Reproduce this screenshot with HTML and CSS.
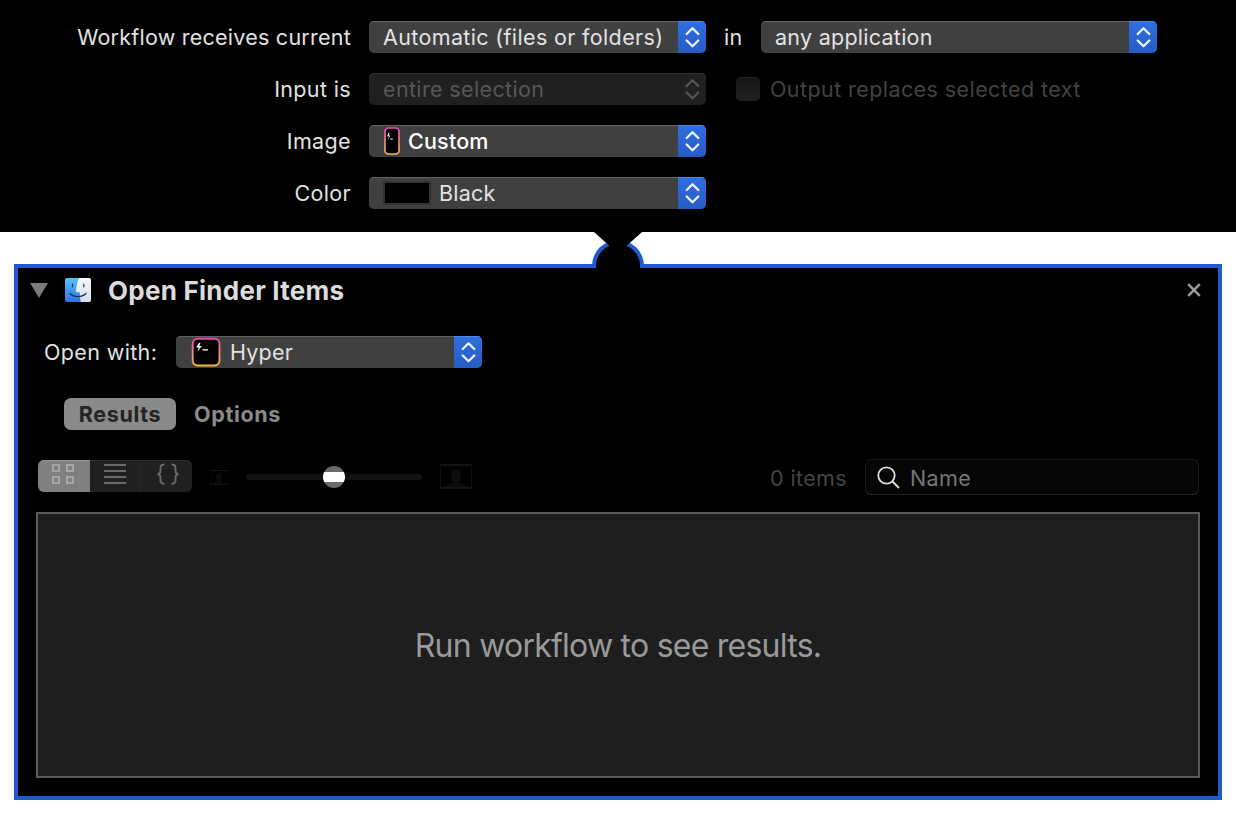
FILE: index.html
```
<!DOCTYPE html>
<html lang="en">
<head>
<meta charset="utf-8">
<title>Workflow</title>
<link rel="stylesheet" href="styles.css">
</head>
<body>
<svg width="0" height="0" class="defs">
  <defs>
    <linearGradient id="hyper" x1="0" y1="0" x2="0" y2="1"><stop offset="0" stop-color="#e84bb0"/><stop offset="1" stop-color="#f6b44c"/></linearGradient>
    <linearGradient id="face" x1="0" y1="0" x2="0" y2="1"><stop offset="0" stop-color="#55c3f8"/><stop offset="1" stop-color="#2f6fea"/></linearGradient>
    <linearGradient id="pale" x1="0" y1="0" x2="0" y2="1"><stop offset="0" stop-color="#f6f7f9"/><stop offset="1" stop-color="#d7e1f2"/></linearGradient>
    <symbol id="chev" viewBox="0 0 28 32"><path d="M8.700 13 14.500 7.200 20.300 13M8.700 19.500 14.500 25.300 20.300 19.500" fill="none" stroke="currentColor" stroke-width="2.300" stroke-linecap="round" stroke-linejoin="round"/></symbol>
    <symbol id="portrait" viewBox="0 0 32 25" preserveAspectRatio="none"><path d="M0 1h32M0 24h32" stroke="#1c1c1c" stroke-width="1.400"/><path d="M.5 1v23M31.500 1v23" stroke="#101010"/><path d="M5 23c1-3 8-3 8-5-3-4-3-13 3-13s6 9 3 13c0 2 7 2 8 5z" fill="#0d0d0d"/></symbol>
  </defs>
</svg>
<header class="inputs">
  <div class="row">
    <label class="label long">Workflow receives current</label>
    <div class="select"><span class="value">Automatic (files or folders)</span><span class="cap"><svg><use href="#chev"/></svg></span></div>
    <span class="in">in</span>
    <div class="select wide"><span class="value">any application</span><span class="cap"><svg><use href="#chev"/></svg></span></div>
  </div>
  <div class="row">
    <label class="label">Input is</label>
    <div class="select disabled"><span class="value">entire selection</span><span class="cap"><svg><use href="#chev"/></svg></span></div>
    <span class="check"></span><span class="check-label">Output replaces selected text</span>
  </div>
  <div class="row">
    <label class="label">Image</label>
    <div class="select">
      <svg class="custom-icon" viewBox="0 0 16 28"><rect x="1" y="1" width="14" height="26" rx="3.400" fill="#000" stroke="url(#hyper)" stroke-width="1.700"/><path d="M4.700 5.500 3.200 9.300h1.700L4 13l2.200-4.600H4.700L5.600 6z" fill="#fff"/><path d="M6.300 12h2.500" stroke="#fff" stroke-width="1.200"/></svg>
      <span class="value custom">Custom</span><span class="cap"><svg><use href="#chev"/></svg></span>
    </div>
  </div>
  <div class="row">
    <label class="label">Color</label>
    <div class="select"><span class="swatch"></span><span class="value black">Black</span><span class="cap"><svg><use href="#chev"/></svg></span></div>
  </div>
</header>
<main class="action">
  <svg class="connector" viewBox="0 0 56 36"><path d="M2 36V34a26 26 0 0 1 52 0v2z" fill="#1f5bcd"/><path d="M6 36V34a22 22 0 0 1 44 0v2zM4 0h48L28 21.500z" fill="#000"/></svg>
  <div class="title-row">
    <svg class="triangle" viewBox="0 0 18 15"><path d="M0 0h18L9 15z" fill="#7b7b7b"/></svg>
    <svg class="finder" viewBox="0 0 26 24"><rect width="26" height="24" rx="2" fill="url(#face)"/><path d="M14 0h10a2 2 0 0 1 2 2v20a2 2 0 0 1-2 2h-8.200c-.7-3-1-6-1-9.800H11c0-4.200 1-10.200 3-14.200z" fill="url(#pale)"/><path d="M7.500 6.200v2.500M18.800 6.200v2.500M5 15.500c4 4 12 4 16 0" fill="none" stroke="#18334f" stroke-width="1.200" stroke-linecap="round"/></svg>
    <h1>Open Finder Items</h1>
    <svg class="close" viewBox="0 0 14 14"><path d="M1.200 1.200l11.600 11.600M12.800 1.200 1.200 12.800" stroke="#9a9a9a" stroke-width="2.600"/></svg>
  </div>
  <div class="open-row">
    <span class="open-label">Open with:</span>
    <div class="select app">
      <svg class="hyper-icon" viewBox="0 0 30 30"><rect x="1.700" y="1.700" width="26.800" height="26.800" rx="5" fill="#000" stroke="url(#hyper)" stroke-width="1.900"/><path d="M8 5.800 5.200 10.400h2.500L6.500 14.500l4.300-5.400H8.200L9.500 6z" fill="#fff"/><path d="M11.500 12.900H17" stroke="#fff" stroke-width="1.400"/></svg>
      <span class="value hyper">Hyper</span><span class="cap"><svg><use href="#chev"/></svg></span>
    </div>
  </div>
  <nav class="tabs"><span class="tab active">Results</span><span class="tab">Options</span></nav>
  <div class="toolbar">
    <div class="segments">
      <span class="seg on"><svg viewBox="0 0 52 32"><path d="M15 5h6v6h-6zM29 5h6v6h-6zM15 17h6v6h-6zM29 17h6v6h-6z" fill="none" stroke="#a6a6a6" stroke-width="2"/></svg></span>
      <span class="seg mid"><svg viewBox="0 0 50 32"><path d="M14 5h22M14 11h22M14 17h22M14 23h22" stroke="#6a6a6a" stroke-width="2"/></svg></span>
      <span class="seg last"><svg viewBox="0 0 51 32"><path d="M23.500 4.500c-3 0-4 .8-4 3.200v3.200c0 2-.8 3-3 3.200 2.200.2 3 1.200 3 3.200v3.200c0 2.400 1 3.200 4 3.200M30.500 4.500c3 0 4 .8 4 3.200v3.200c0 2 .8 3 3 3.200-2.200.2-3 1.200-3 3.200v3.200c0 2.400-1 3.200-4 3.200" fill="none" stroke="#6a6a6a" stroke-width="1.900"/></svg></span>
    </div>
    <svg class="small-pic"><use href="#portrait"/></svg>
    <div class="slider"><span class="knob"></span></div>
    <svg class="big-pic"><use href="#portrait"/></svg>
    <span class="count">0 items</span>
    <div class="search"><svg viewBox="0 0 24 24"><circle cx="9.500" cy="9.500" r="8.200" fill="none" stroke="#dcdcdc" stroke-width="1.800"/><path d="M15.500 15.500l6.500 6.500" stroke="#dcdcdc" stroke-width="2"/></svg><span>Name</span></div>
  </div>
  <section class="results"><span>Run workflow to see results.</span></section>
</main>
</body>
</html>
```
FILE: styles.css
```
* { box-sizing: border-box; }
body { margin: 0; background: #fff; width: 1236px; height: 822px; overflow: hidden; font-family: Inter, "Liberation Sans", sans-serif; font-size: 21.5px; letter-spacing: .36px; color: #e2e2e2; }
svg { display: block; flex: none; }
.defs { position: absolute; }
span, h1, label { white-space: nowrap; }
.inputs { background: #000; height: 232px; padding-top: 21px; display: flex; flex-direction: column; gap: 20px; }
.row { display: flex; align-items: center; height: 32px; line-height: 32px; }
.label { width: 351px; margin-right: 18px; text-align: right; }
.long { letter-spacing: .24px; }
.select { display: flex; align-items: center; width: 337px; height: 32px; padding-left: 14px; border-radius: 5px; background: #404040; box-shadow: inset 0 1px #636363; overflow: hidden; line-height: 32px; }
.select .cap { margin-left: auto; width: 28px; height: 32px; background: linear-gradient(#2f6fe0, #265cc5); box-shadow: inset 0 1px #5488e6; color: #eef3fc; }
.cap svg { width: 28px; height: 32px; }
.select.disabled { background: #202020; box-shadow: inset 0 1px #303030; color: #575757; }
.disabled .cap { background: none; box-shadow: none; color: #575757; }
.wide { width: 396px; letter-spacing: .26px; }
.in { width: 55px; padding-left: 18px; }
.check { width: 24px; height: 24px; margin: 0 10px 0 30px; border-radius: 5px; background: linear-gradient(#151515, #202020); box-shadow: inset 0 1px #252525; }
.check-label { color: #424242; letter-spacing: .42px; }
.custom-icon { width: 16px; height: 28px; margin-left: 1px; margin-right: 8px; }
.custom { color: #fff; font-weight: 500; letter-spacing: .2px; }
.black, .hyper { letter-spacing: .2px; }
.swatch { width: 48px; height: 24px; background: #000; border: 2px solid #333; margin-right: 8px; }
.action { position: relative; margin: 32px 14px 0; height: 536px; border: 4px solid #1f5bcd; background: #000; padding: 0 18px; }
.connector { position: absolute; left: 572px; top: -36px; width: 56px; height: 36px; }
.title-row { display: flex; align-items: center; height: 46px; margin-left: -6px; }
.triangle { width: 18px; height: 15px; margin-bottom: 2px; }
.finder { width: 26px; height: 24px; margin: 0 17px 2px; }
h1 { margin: 0; font-size: 26px; font-weight: 700; letter-spacing: .25px; line-height: 32px; color: #dcdcdc; }
.close { width: 14px; height: 14px; margin: 0 -1px 2px auto; }
.open-row { display: flex; align-items: center; height: 32px; margin-top: 22px; line-height: 32px; padding-left: 8px; }
.open-label { width: 132px; }
.app { width: 306px; }
.hyper-icon { width: 30px; height: 30px; margin-left: 1px; margin-right: 9px; }
.tabs { display: flex; margin: 30px 0 0 28px; line-height: 32px; font-weight: 700; letter-spacing: .65px; color: #8b8b8b; }
.tab { height: 32px; }
.tab.active { width: 112px; text-align: center; margin-right: 18px; border-radius: 7px; background: #8a8a8a; color: #242424; }
.toolbar { display: flex; align-items: center; height: 36px; margin-top: 29px; }
.segments { display: flex; height: 32px; margin: -2px 18px 0 2px; border-radius: 6px; overflow: hidden; background: #202020; box-shadow: inset 0 1px #303030; }
.seg { width: 51px; height: 32px; }
.seg svg { height: 32px; width: 100%; }
.seg.on { width: 52px; background: #808080; box-shadow: inset 0 1px #989898; }
.seg.mid { border-right: 1px solid #292929; }
.small-pic { width: 18px; height: 15px; margin-top: 1px; }
.slider { width: 176px; height: 6px; border-radius: 3px; background: #121212; margin: 0 18px; display: flex; align-items: center; justify-content: center; }
.knob { width: 22px; height: 22px; flex: none; border-radius: 50%; background: linear-gradient(#6a6a6a 6px, #fff 6px 16px, #6a6a6a 16px); }
.big-pic { width: 32px; height: 25px; margin-top: -2px; }
.count { margin: 2px 18px 0 auto; color: #444; }
.search { width: 334px; height: 36px; display: flex; align-items: center; margin-right: 1px; padding-left: 11px; border: 1px solid #181818; border-bottom-color: #242424; border-radius: 6px; background: #060606; color: #767676; }
.search svg { width: 24px; height: 24px; margin: 2px 9px 0 0; }
.search span { margin-top: 2px; }
.results { height: 266px; margin-top: 17px; border: 2px solid #5a5a5a; background: #1e1e1e; display: flex; align-items: center; justify-content: center; font-size: 32px; letter-spacing: -.76px; color: #9a9a9a; }
```
